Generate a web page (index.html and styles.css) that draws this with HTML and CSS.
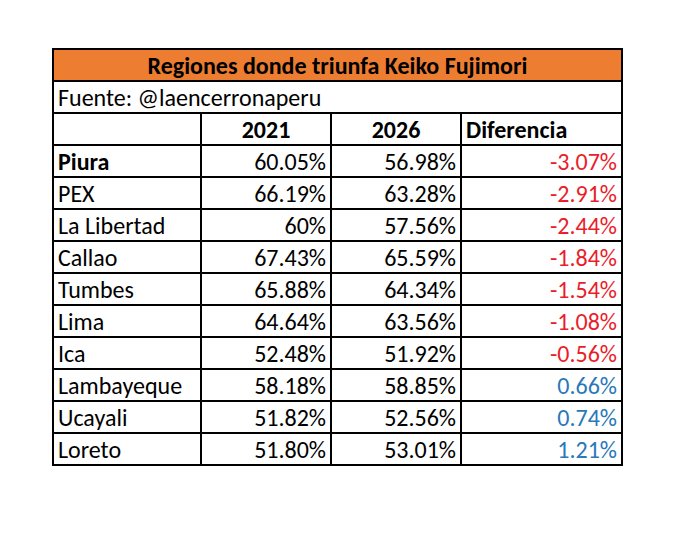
FILE: index.html
```html
<!DOCTYPE html>
<html lang="es">
<head>
<meta charset="utf-8">
<title>Regiones donde triunfa Keiko Fujimori</title>
<link rel="stylesheet" href="styles.css">
</head>
<body>
<table class="sheet">
  <colgroup>
    <col class="c-region">
    <col class="c-num">
    <col class="c-num">
    <col class="c-diff">
  </colgroup>
  <tr class="title-row"><td colspan="4">Regiones donde triunfa Keiko Fujimori</td></tr>
  <tr><td colspan="4">Fuente: @laencerronaperu</td></tr>
  <tr class="head-row"><td></td><td class="ctr">2021</td><td class="ctr">2026</td><td>Diferencia</td></tr>
  <tr><td class="bold">Piura</td><td class="num">60.05%</td><td class="num">56.98%</td><td class="num neg">-3.07%</td></tr>
  <tr><td>PEX</td><td class="num">66.19%</td><td class="num">63.28%</td><td class="num neg">-2.91%</td></tr>
  <tr><td>La Libertad</td><td class="num">60%</td><td class="num">57.56%</td><td class="num neg">-2.44%</td></tr>
  <tr><td>Callao</td><td class="num">67.43%</td><td class="num">65.59%</td><td class="num neg">-1.84%</td></tr>
  <tr><td>Tumbes</td><td class="num">65.88%</td><td class="num">64.34%</td><td class="num neg">-1.54%</td></tr>
  <tr><td>Lima</td><td class="num">64.64%</td><td class="num">63.56%</td><td class="num neg">-1.08%</td></tr>
  <tr><td>Ica</td><td class="num">52.48%</td><td class="num">51.92%</td><td class="num neg">-0.56%</td></tr>
  <tr><td>Lambayeque</td><td class="num">58.18%</td><td class="num">58.85%</td><td class="num pos">0.66%</td></tr>
  <tr><td>Ucayali</td><td class="num">51.82%</td><td class="num">52.56%</td><td class="num pos">0.74%</td></tr>
  <tr><td>Loreto</td><td class="num">51.80%</td><td class="num">53.01%</td><td class="num pos">1.21%</td></tr>
</table>
</body>
</html>
```
FILE: styles.css
```css
html, body {
  margin: 0;
  padding: 0;
  background: #ffffff;
}
body {
  font-family: "Carlito", "Lato", "Liberation Sans", sans-serif;
  color: #000000;
}
.sheet {
  border-collapse: collapse;
  table-layout: fixed;
  width: 571px;
  margin: 48px 0 0 52px;
  font-size: 24px;
}
.c-region { width: 148px; }
.c-num { width: 130px; }
.c-diff { width: 161px; }
.sheet td {
  border: 2px solid #000000;
  height: 28px;
  padding: 2px 4px 0 4px;
  line-height: 28px;
  white-space: nowrap;
  overflow: hidden;
}
.title-row td {
  background: #ed7d31;
  font-weight: bold;
  text-align: center;
}
.head-row td { font-weight: bold; }
.ctr { text-align: center; }
.bold { font-weight: bold; }
.num { text-align: right; }
.neg { color: #ea1d2a; }
.pos { color: #2a78b8; }
```
